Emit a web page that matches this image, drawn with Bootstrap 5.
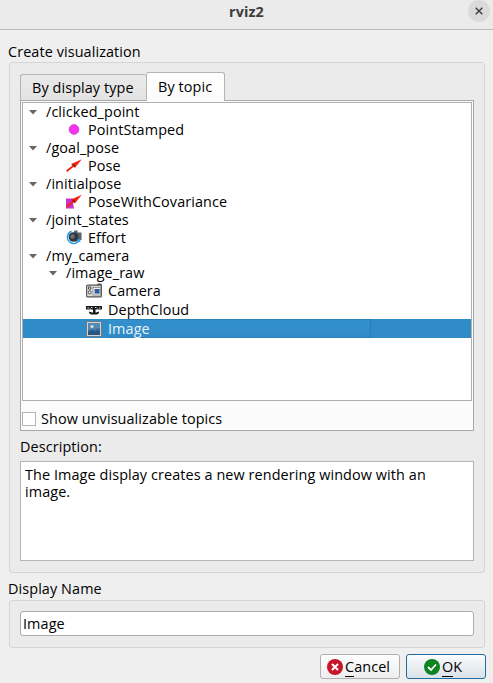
<!DOCTYPE html>
<html lang="en">
<head>
<meta charset="utf-8">
<title>rviz2</title>
<link href="https://cdn.jsdelivr.net/npm/bootstrap@5.3.0/dist/css/bootstrap.min.css" rel="stylesheet">
<style>
body{font-family:"Open Sans","Noto Sans",sans-serif;font-size:14.4px;letter-spacing:.1px;line-height:18px;color:#000;background:#efefef;overflow:hidden}
.dialog{width:493px;height:683px}
.titlebar{height:30px;background:#ebebeb;border-bottom:1px solid #b8b8b8;color:#3d3d3d;padding:0 3px 7px}
.win-title{padding-top:2px}
.win-close{width:22px;height:22px;background:#dadada}
.group-label{height:20px;padding-left:8px;margin-top:12px}
.gl-bottom{margin-top:6px;margin-bottom:1px}
.group-frame{margin:0 8px 0 9px;border:1px solid #d5d5d5;border-radius:3px;background:#ebebeb;padding:10px 10px 11px}
.gf-top{height:511px;flex:none;padding-top:9px}
.tabs{height:28px}
.tab-item{border:1px solid #b4b4b4;border-bottom:0;border-radius:3px 3px 0 0}
.tab-off{width:126px;height:26px;background:linear-gradient(#e9e9e9,#e3e3e3);border-right:0;padding-left:11px}
.tab-on{width:79px;height:29px;background:linear-gradient(#fff,#fbfbfb);padding-left:11px;margin-bottom:-1px;z-index:1}
.pane{height:331px;border:1px solid #a8a8a8;background:#fbfbfb;padding:1px}
.tree{height:299px;border:1px solid #b0b0b0;background:#fff}
.tree-row{height:18px;padding-left:6px}
.tree-row .arrow{width:8px;height:5px;margin-right:9px;flex:none}
.tree-row .pic{width:16px;height:16px;margin-right:6px;flex:none}
.lvl1{padding-left:43px}
.lvl1b{padding-left:26px;height:16px}
.lvl2{padding-left:63px;height:19px}
.chosen{background:#308cc6;color:#e9f3fa}
.chosen .cell{height:19px;width:263px;background:linear-gradient(#3290cc,#308cc6);border:1px solid #2a7eb3;border-left:0}
.check-row{padding-top:9px}
.tickbox{width:14px;height:14px;border:1px solid #b4b4b4;background:#fff;margin-right:5px}
.desc-label{height:30px;padding-top:2px}
.desc{height:100px;border:1px solid #b4b4b4;background:#fff;padding:4px;line-height:17px}
.field{height:25px;border:1px solid #ababab;border-radius:3px;background:#fff;padding-left:2px}
.actions{gap:6px;padding:6px 7px 0 0}
.push{width:80px;height:25px;border:1px solid #b0b0b0;border-radius:3px;background:linear-gradient(#fefefe,#eee);padding-left:6px}
.push svg{margin-right:2px}
.push.ok{border-color:#1f6d9f;background:linear-gradient(#fbfcfd,#d9e2e8);padding-left:17px}
.key{border-bottom:1px solid #000;line-height:16px}
</style>
<script src="https://cdn.jsdelivr.net/npm/bootstrap@5.3.0/dist/js/bootstrap.bundle.min.js"></script>
</head>
<body>
<div class="dialog d-flex flex-column">
  <header class="titlebar d-flex align-items-center justify-content-between">
    <span class="win-close invisible"></span>
    <strong class="win-title fw-bold">rviz2</strong>
    <span class="win-close rounded-circle d-flex align-items-center justify-content-center"><svg width="8" height="8" viewBox="0 0 8 8"><path d="M.7.7l6.6 6.6M7.3.7L.7 7.3" stroke="#3d3d3d" stroke-width="1.4"/></svg></span>
  </header>

  <div class="group-label d-flex align-items-center">Create visualization</div>
  <section class="group-frame gf-top">
    <div class="tabs d-flex align-items-end">
      <div class="tab-item tab-off d-flex align-items-center">By display type</div>
      <div class="tab-item tab-on d-flex align-items-center position-relative">By topic</div>
    </div>
    <div class="pane">
      <div class="tree">
        <div class="tree-row d-flex align-items-center"><svg class="arrow" viewBox="0 0 8 5"><path d="M0 0h8L4 4.5z" fill="#666"/></svg>/clicked_point</div>
        <div class="tree-row lvl1 d-flex align-items-center"><svg class="pic" viewBox="0 0 16 16"><circle cx="8" cy="7.5" r="4.9" fill="#f433ef" stroke="#c52bc2" stroke-width=".6"/></svg>PointStamped</div>
        <div class="tree-row d-flex align-items-center"><svg class="arrow" viewBox="0 0 8 5"><path d="M0 0h8L4 4.5z" fill="#666"/></svg>/goal_pose</div>
        <div class="tree-row lvl1 d-flex align-items-center"><svg class="pic" viewBox="0 0 16 16"><path d="M.6 13.3L8.5 7" stroke="#f02410" stroke-width="1.8"/><path d="M15.8 1.2L5.2 6l3.8 3.7z" fill="#f32510"/><path d="M5.2 6L9 9.7 9.2 6.6z" fill="#9f1a0d"/></svg>Pose</div>
        <div class="tree-row d-flex align-items-center"><svg class="arrow" viewBox="0 0 8 5"><path d="M0 0h8L4 4.5z" fill="#666"/></svg>/initialpose</div>
        <div class="tree-row lvl1 d-flex align-items-center"><svg class="pic" viewBox="0 0 16 16"><path d="M0 4.5h7l1 2-1 2 1 6H0z" fill="#c933cc"/><path d="M.8 12.8L8.5 6.5" stroke="#f02410" stroke-width="1.8"/><path d="M15.8.7L5.2 5.5 9 9.2z" fill="#f32510"/><path d="M5.2 5.5L9 9.2l.2-3.1z" fill="#9f1a0d"/></svg>PoseWithCovariance</div>
        <div class="tree-row d-flex align-items-center"><svg class="arrow" viewBox="0 0 8 5"><path d="M0 0h8L4 4.5z" fill="#666"/></svg>/joint_states</div>
        <div class="tree-row lvl1 d-flex align-items-center"><svg class="pic" viewBox="0 0 16 16"><path d="M8 .5h3.500v2H15.500v7.500H12l-2 2.500z" fill="#596067"/><circle cx="7.500" cy="7" r="4.800" fill="#30363b"/><circle cx="6.500" cy="6.500" r="2.200" fill="#68727a"/><path d="M5.500 1.300a6.300 6.300 0 1 0 8 8.500" fill="none" stroke="#299bed" stroke-width="1.500"/><path d="M11 9.500l3.500-.700-.3 3.700z" fill="#299bed"/></svg>Effort</div>
        <div class="tree-row d-flex align-items-center"><svg class="arrow" viewBox="0 0 8 5"><path d="M0 0h8L4 4.5z" fill="#666"/></svg>/my_camera</div>
        <div class="tree-row lvl1b d-flex align-items-center"><svg class="arrow" viewBox="0 0 8 5"><path d="M0 0h8L4 4.5z" fill="#666"/></svg>/image_raw</div>
        <div class="tree-row lvl2 d-flex align-items-center"><svg class="pic" viewBox="0 0 16 16"><path d="M10 2.5L12 .6h3.500v3z" fill="#555"/><rect x=".6" y="2.1" width="14.8" height="11.8" rx="1" fill="#d9d9d6" stroke="#555" stroke-width="1.1"/><rect x="7" y="4.5" width="7.6" height="7.5" fill="#f1f1ef" stroke="#666" stroke-width=".6"/><rect x="8.600" y="6" width="5" height="4.600" fill="#2c5a9d"/><circle cx="3.700" cy="5" r="1.300" fill="#fff" stroke="#222" stroke-width=".9"/><circle cx="3.700" cy="9.300" r="1.500" fill="#fff" stroke="#333" stroke-width=".9"/></svg>Camera</div>
        <div class="tree-row lvl2 d-flex align-items-center"><svg class="pic" viewBox="0 0 16 16"><path d="M0 4h16v3.500H0zM7 7.500h2.500v3H7zM3 9.500l3 1h4l3-1v1.500l-2 1.500H5l-2-1.500z" fill="#171717"/><path d="M1.500 6h1.700M5 5.500h1.500M9 5.500h1.500M13 6h1.500M4 7h1M11 7h1" stroke="#ddd" stroke-width="1.100"/></svg>DepthCloud</div>
        <div class="tree-row lvl2 chosen d-flex align-items-center"><svg class="pic" viewBox="0 0 16 16"><rect x=".5" y=".5" width="15" height="15" fill="#cdd5d8" stroke="#6c7c87"/><rect x="2" y="2" width="12" height="12" fill="#3c6f9f"/><path d="M2 2h12v5L2 9z" fill="#5588b5"/><path d="M2 11l4-2 3 1.500L12 9l2 2v3H2z" fill="#28567f"/><circle cx="6" cy="5.500" r="1.600" fill="#d6e2cf"/></svg><span class="cell d-flex align-items-center">Image</span></div>
      </div>
      <div class="check-row d-flex align-items-center"><span class="tickbox"></span><span>Show unvisualizable topics</span></div>
    </div>
    <div class="desc-label d-flex align-items-center">Description:</div>
    <div class="desc">The Image display creates a new rendering window with an image.</div>
  </section>

  <div class="group-label gl-bottom d-flex align-items-center">Display Name</div>
  <section class="group-frame"><div class="field d-flex align-items-center">Image</div></section>

  <footer class="actions d-flex justify-content-end">
    <div class="push d-flex align-items-center"><svg width="16" height="16" viewBox="0 0 16 16"><circle cx="8" cy="8" r="8" fill="#c7162b"/><path d="M5 5l6 6M11 5l-6 6" stroke="#fff" stroke-width="2"/></svg><span><span class="key">C</span>ancel</span></div>
    <div class="push ok d-flex align-items-center"><svg width="16" height="16" viewBox="0 0 16 16"><circle cx="8" cy="8" r="8" fill="#0e8420"/><path d="M4 8l3 3 5-5.5" fill="none" stroke="#fff" stroke-width="1.8"/></svg><span><span class="key">O</span>K</span></div>
  </footer>
</div>
</body>
</html>
